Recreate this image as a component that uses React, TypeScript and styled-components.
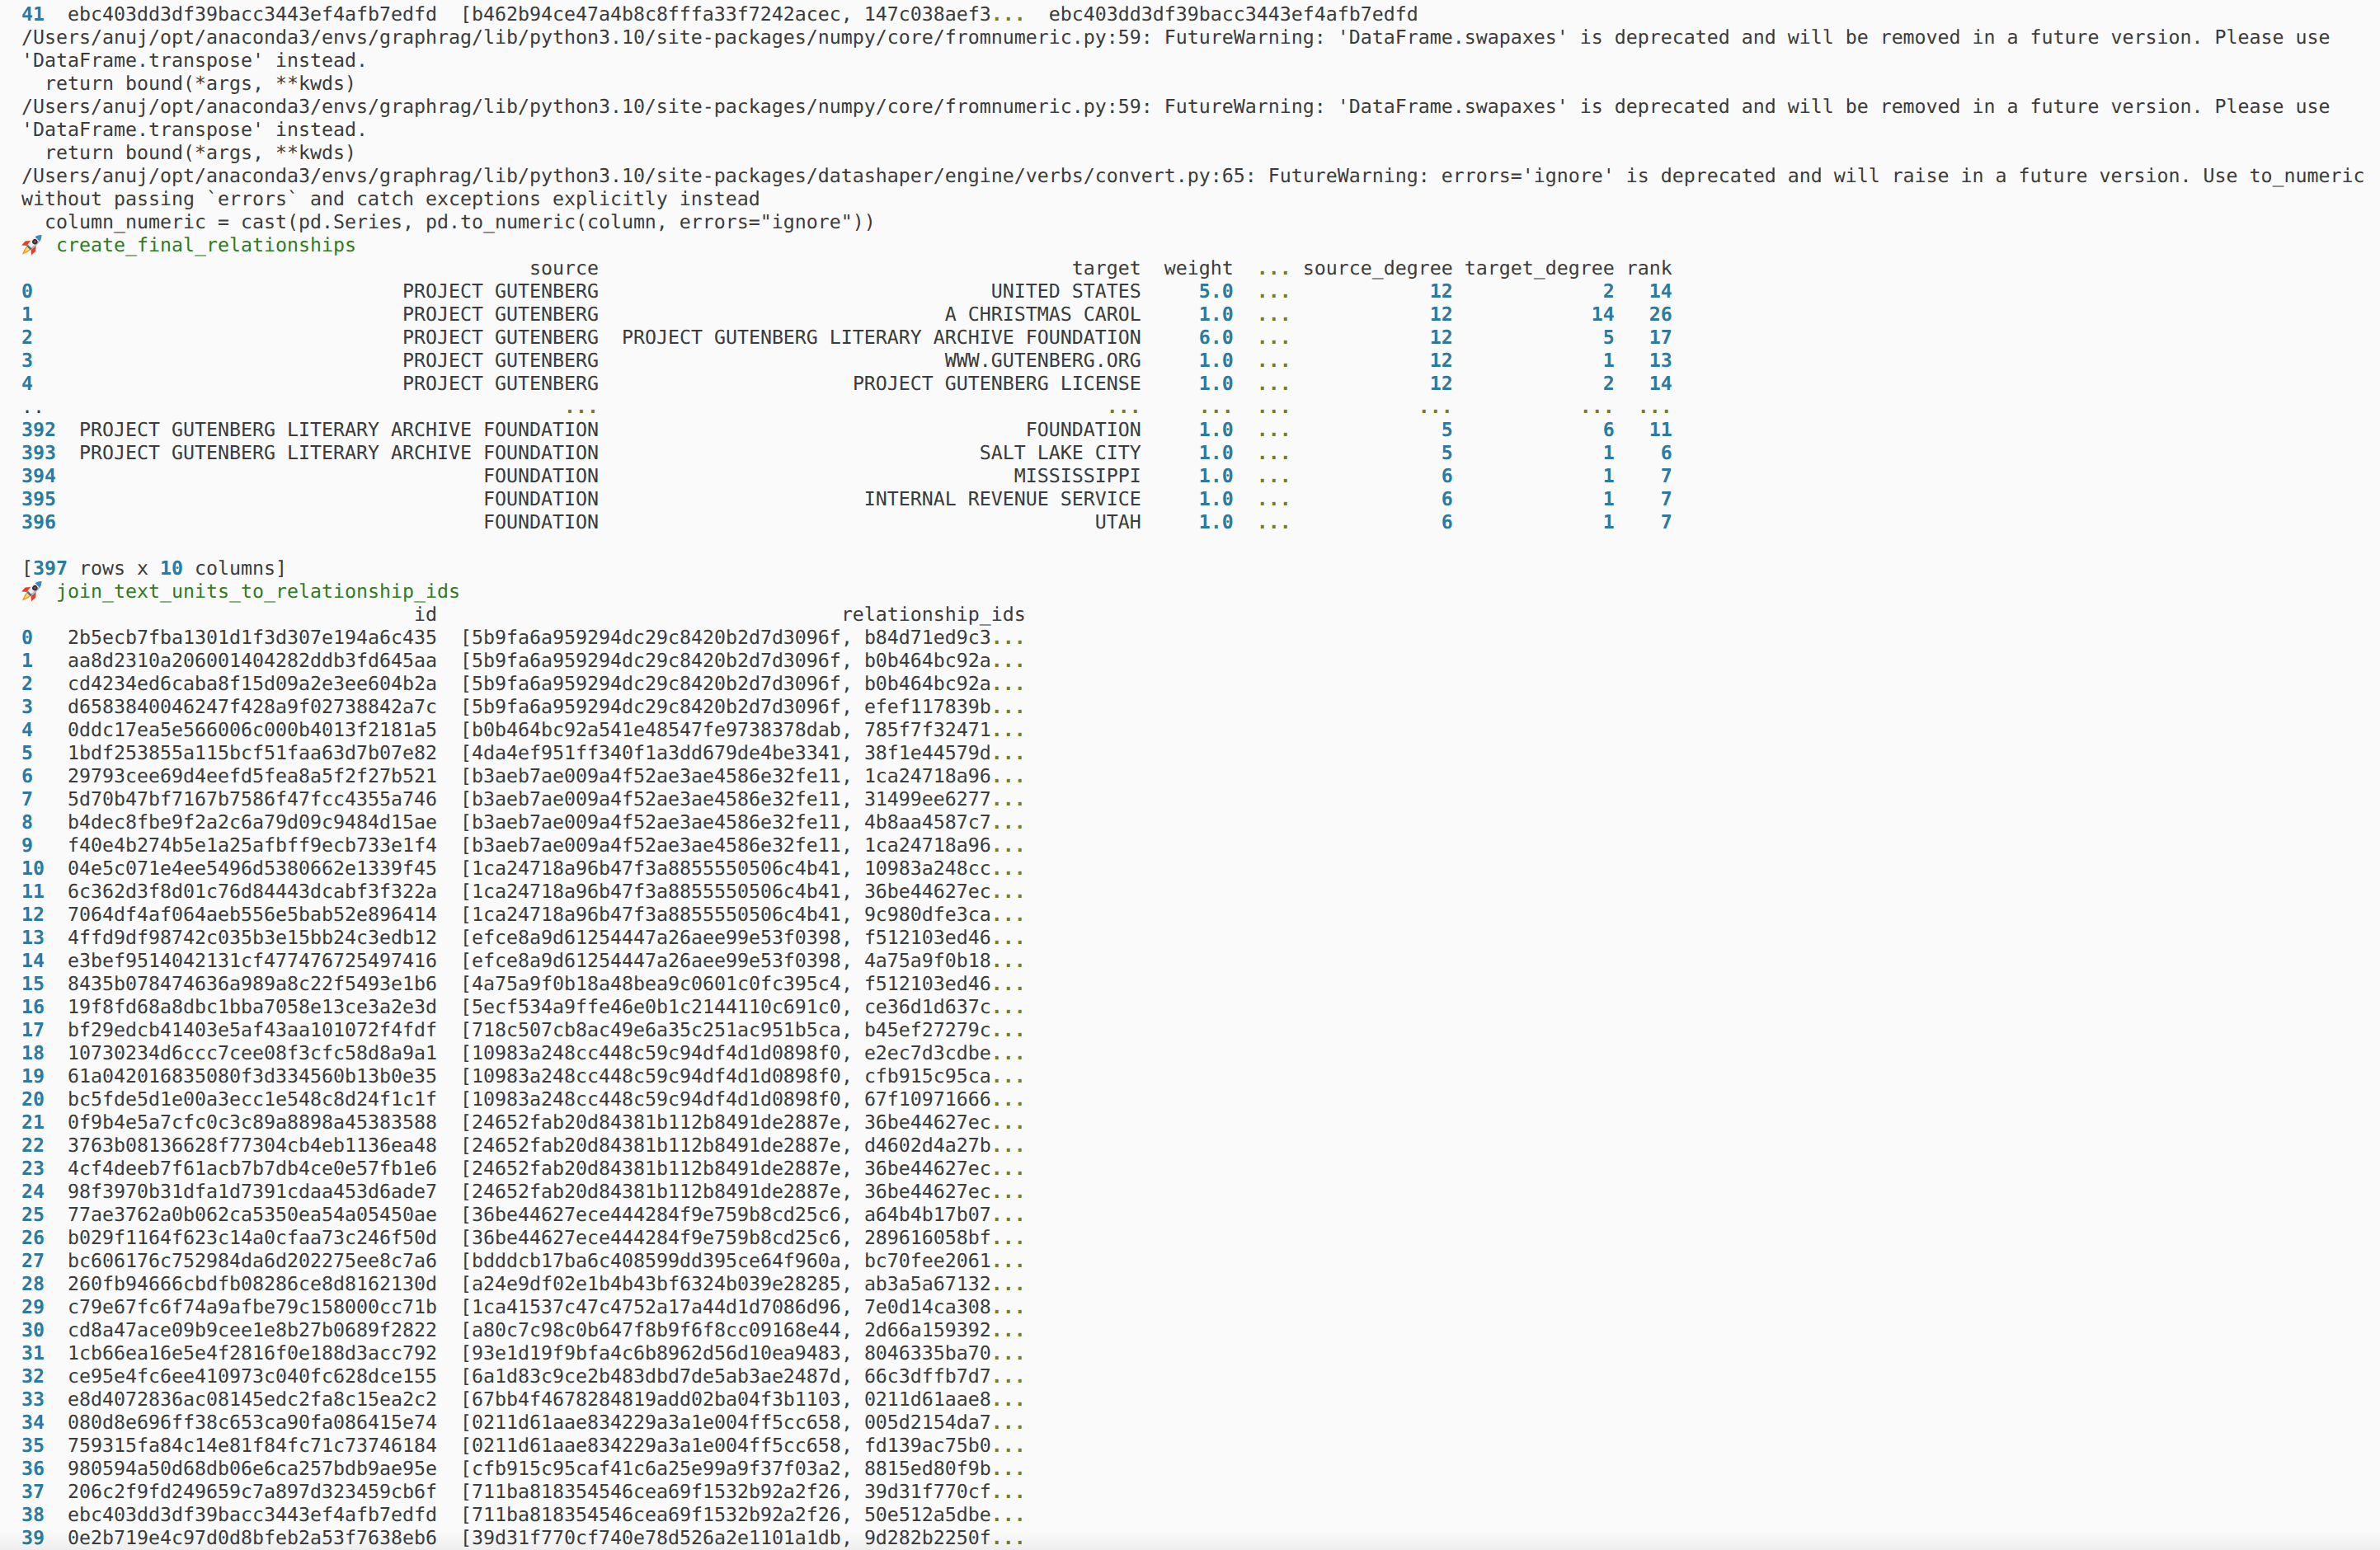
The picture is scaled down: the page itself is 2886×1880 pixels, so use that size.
import React from "react";
import styled, { createGlobalStyle } from "styled-components";

const GlobalStyle = createGlobalStyle`
	html, body {
		margin: 0;
		padding: 0;
		background: #fafafa;
	}
`;

const Terminal = styled.div`
	position: relative;
	width: 2886px;
	height: 1880px;
	overflow: hidden;
	box-sizing: border-box;
	padding: 4px 0 0 26px;
	background: #fafafa;
	color: #3b3b3b;
	font-family: "DejaVu Sans Mono", monospace;
	font-size: 23.256px;
	line-height: 28px;
	text-rendering: geometricPrecision;
`;

const Line = styled.div`
	height: 28px;
	white-space: pre;
`;

const Num = styled.span`
	color: #2f7a9c;
	font-weight: 700;
`;

const Dots = styled.span`
	color: #7a7a1c;
	font-weight: 700;
`;

const Task = styled.span`
	color: #2f7a22;
`;

const EmojiSlot = styled.span`
	display: inline-block;
	width: 2ch;
	height: 24px;
	vertical-align: -3px;

	svg {
		display: block;
		overflow: visible;
	}
`;

const BottomFade = styled.div`
	position: absolute;
	left: 0;
	right: 0;
	bottom: 0;
	height: 22px;
	background: linear-gradient(to bottom, rgba(0, 0, 0, 0), rgba(0, 0, 0, 0.05));
`;

const Rocket = () => (
	<EmojiSlot>
		<svg width="26" height="25" viewBox="0 0 24 24">
			<g transform="rotate(45 12 12)">
				<path d="M9 17 H15 C15.2 21 13.5 25 12 28.5 C10.5 25 8.8 21 9 17 Z" fill="#f39a26" />
				<path d="M10.2 17 H13.8 C13.8 20 12.8 22.5 12 24.5 C11.2 22.5 10.2 20 10.2 17 Z" fill="#ffe27a" />
				<path d="M8.4 9 L3.6 15 L4 21.5 L9 17 Z" fill="#e2402f" />
				<path d="M15.6 9 L20.4 15 L20 21.5 L15 17 Z" fill="#e2402f" />
				<path d="M12 -3.5 C16.5 1 17 8 15.4 17 H8.6 C7 8 7.5 1 12 -3.5 Z" fill="#e9edf0" />
				<path d="M13.5 -1.8 C16.4 2 16.8 8 15.4 17 H13.4 C14.8 9 14.8 3 13.5 -1.8 Z" fill="#aeb8c0" />
				<path d="M12 -3.5 C14 -1.6 15.2 0.8 15.8 3.4 H8.2 C8.8 0.8 10 -1.6 12 -3.5 Z" fill="#3f86c6" />
				<path d="M8.6 15.6 H15.4 L15 18 H9 Z" fill="#5d6870" />
				<circle cx="12" cy="7.5" r="3.1" fill="#2c3136" />
				<circle cx="12" cy="7.5" r="1.5" fill="#b8343a" />
			</g>
		</svg>
	</EmojiSlot>
);

const warningPath = "/Users/anuj/opt/anaconda3/envs/graphrag/lib/python3.10/site-packages";

// Table one: pandas pads every column, so the rows are built as padded strings
const sourceRows: [string, string, string, string, string, string, string][] = [
	["0", "PROJECT GUTENBERG", "UNITED STATES", "5.0", "12", "2", "14"],
	["1", "PROJECT GUTENBERG", "A CHRISTMAS CAROL", "1.0", "12", "14", "26"],
	["2", "PROJECT GUTENBERG", "PROJECT GUTENBERG LITERARY ARCHIVE FOUNDATION", "6.0", "12", "5", "17"],
	["3", "PROJECT GUTENBERG", "WWW.GUTENBERG.ORG", "1.0", "12", "1", "13"],
	["4", "PROJECT GUTENBERG", "PROJECT GUTENBERG LICENSE", "1.0", "12", "2", "14"],
	["..", "...", "...", "...", "...", "...", "..."],
	["392", "PROJECT GUTENBERG LITERARY ARCHIVE FOUNDATION", "FOUNDATION", "1.0", "5", "6", "11"],
	["393", "PROJECT GUTENBERG LITERARY ARCHIVE FOUNDATION", "SALT LAKE CITY", "1.0", "5", "1", "6"],
	["394", "FOUNDATION", "MISSISSIPPI", "1.0", "6", "1", "7"],
	["395", "FOUNDATION", "INTERNAL REVENUE SERVICE", "1.0", "6", "1", "7"],
	["396", "FOUNDATION", "UTAH", "1.0", "6", "1", "7"],
];

const A = "5b9fa6a959294dc29c8420b2d7d3096f";
const B = "b3aeb7ae009a4f52ae3ae4586e32fe11";
const C = "1ca24718a96b47f3a8855550506c4b41";
const D = "efce8a9d61254447a26aee99e53f0398";
const E = "10983a248cc448c59c94df4d1d0898f0";
const F = "24652fab20d84381b112b8491de2887e";
const G = "36be44627ece444284f9e759b8cd25c6";
const H = "0211d61aae834229a3a1e004ff5cc658";
const I = "711ba818354546cea69f1532b92a2f26";

const joinRows: [string, string, string][] = [
	["2b5ecb7fba1301d1f3d307e194a6c435", A, "b84d71ed9c3"],
	["aa8d2310a206001404282ddb3fd645aa", A, "b0b464bc92a"],
	["cd4234ed6caba8f15d09a2e3ee604b2a", A, "b0b464bc92a"],
	["d6583840046247f428a9f02738842a7c", A, "efef117839b"],
	["0ddc17ea5e566006c000b4013f2181a5", "b0b464bc92a541e48547fe9738378dab", "785f7f32471"],
	["1bdf253855a115bcf51faa63d7b07e82", "4da4ef951ff340f1a3dd679de4be3341", "38f1e44579d"],
	["29793cee69d4eefd5fea8a5f2f27b521", B, "1ca24718a96"],
	["5d70b47bf7167b7586f47fcc4355a746", B, "31499ee6277"],
	["b4dec8fbe9f2a2c6a79d09c9484d15ae", B, "4b8aa4587c7"],
	["f40e4b274b5e1a25afbff9ecb733e1f4", B, "1ca24718a96"],
	["04e5c071e4ee5496d5380662e1339f45", C, "10983a248cc"],
	["6c362d3f8d01c76d84443dcabf3f322a", C, "36be44627ec"],
	["7064df4af064aeb556e5bab52e896414", C, "9c980dfe3ca"],
	["4ffd9df98742c035b3e15bb24c3edb12", D, "f512103ed46"],
	["e3bef9514042131cf477476725497416", D, "4a75a9f0b18"],
	["8435b078474636a989a8c22f5493e1b6", "4a75a9f0b18a48bea9c0601c0fc395c4", "f512103ed46"],
	["19f8fd68a8dbc1bba7058e13ce3a2e3d", "5ecf534a9ffe46e0b1c2144110c691c0", "ce36d1d637c"],
	["bf29edcb41403e5af43aa101072f4fdf", "718c507cb8ac49e6a35c251ac951b5ca", "b45ef27279c"],
	["10730234d6ccc7cee08f3cfc58d8a9a1", E, "e2ec7d3cdbe"],
	["61a042016835080f3d334560b13b0e35", E, "cfb915c95ca"],
	["bc5fde5d1e00a3ecc1e548c8d24f1c1f", E, "67f10971666"],
	["0f9b4e5a7cfc0c3c89a8898a45383588", F, "36be44627ec"],
	["3763b08136628f77304cb4eb1136ea48", F, "d4602d4a27b"],
	["4cf4deeb7f61acb7b7db4ce0e57fb1e6", F, "36be44627ec"],
	["98f3970b31dfa1d7391cdaa453d6ade7", F, "36be44627ec"],
	["77ae3762a0b062ca5350ea54a05450ae", G, "a64b4b17b07"],
	["b029f1164f623c14a0cfaa73c246f50d", G, "289616058bf"],
	["bc606176c752984da6d202275ee8c7a6", "bdddcb17ba6c408599dd395ce64f960a", "bc70fee2061"],
	["260fb94666cbdfb08286ce8d8162130d", "a24e9df02e1b4b43bf6324b039e28285", "ab3a5a67132"],
	["c79e67fc6f74a9afbe79c158000cc71b", "1ca41537c47c4752a17a44d1d7086d96", "7e0d14ca308"],
	["cd8a47ace09b9cee1e8b27b0689f2822", "a80c7c98c0b647f8b9f6f8cc09168e44", "2d66a159392"],
	["1cb66ea16e5e4f2816f0e188d3acc792", "93e1d19f9bfa4c6b8962d56d10ea9483", "8046335ba70"],
	["ce95e4fc6ee410973c040fc628dce155", "6a1d83c9ce2b483dbd7de5ab3ae2487d", "66c3dffb7d7"],
	["e8d4072836ac08145edc2fa8c15ea2c2", "67bb4f4678284819add02ba04f3b1103", "0211d61aae8"],
	["080d8e696ff38c653ca90fa086415e74", H, "005d2154da7"],
	["759315fa84c14e81f84fc71c73746184", H, "fd139ac75b0"],
	["980594a50d68db06e6ca257bdb9ae95e", "cfb915c95caf41c6a25e99a9f37f03a2", "8815ed80f9b"],
	["206c2f9fd249659c7a897d323459cb6f", I, "39d31f770cf"],
	["ebc403dd3df39bacc3443ef4afb7edfd", I, "50e512a5dbe"],
	["0e2b719e4c97d0d8bfeb2a53f7638eb6", "39d31f770cf740e78d526a2e1101a1db", "9d282b2250f"],
];

// Padded dots are bold olive, anything else in the cell keeps the given look
const numCell = (value: string, width: number) => {
	const pad = " ".repeat(Math.max(0, width - value.length));
	return (
		<>
			{pad}
			{value === "..." ? <Dots>...</Dots> : <Num>{value}</Num>}
		</>
	);
};

const textCell = (value: string, width: number) => {
	const pad = " ".repeat(Math.max(0, width - value.length));
	return (
		<>
			{pad}
			{value === "..." ? <Dots>...</Dots> : value}
		</>
	);
};

const Swapaxes = () => (
	<>
		<Line>
			{warningPath}/numpy/core/fromnumeric.py:59: FutureWarning: 'DataFrame.swapaxes' is deprecated and will be removed
			in a future version. Please use
		</Line>
		<Line>'DataFrame.transpose' instead.</Line>
		<Line>{"  return bound(*args, **kwds)"}</Line>
	</>
);

const App = () => (
	<>
		<GlobalStyle />
		<Terminal>
			<Line>
				<Num>41</Num>
				{"  ebc403dd3df39bacc3443ef4afb7edfd  [b462b94ce47a4b8c8fffa33f7242acec, 147c038aef3"}
				<Dots>...</Dots>
				{"  ebc403dd3df39bacc3443ef4afb7edfd"}
			</Line>
			<Swapaxes />
			<Swapaxes />
			<Line>
				{warningPath}/datashaper/engine/verbs/convert.py:65: FutureWarning: errors='ignore' is deprecated and will raise
				in a future version. Use to_numeric
			</Line>
			<Line>without passing `errors` and catch exceptions explicitly instead</Line>
			<Line>{'  column_numeric = cast(pd.Series, pd.to_numeric(column, errors="ignore"))'}</Line>
			<Line>
				<Rocket /> <Task>create_final_relationships</Task>
			</Line>
			<Line>
				{"     "}
				{textCell("source", 45)}
				{"  "}
				{textCell("target", 45)}
				{"  "}
				{textCell("weight", 6)}
				{"  "}
				<Dots>...</Dots> {textCell("source_degree", 13)} {textCell("target_degree", 13)} {textCell("rank", 4)}
			</Line>
			{sourceRows.map(([index, source, target, weight, sourceDegree, targetDegree, rank]) => (
				<Line key={index}>
					{index === ".." ? ".. " : <Num>{index.padEnd(3)}</Num>}
					{"  "}
					{textCell(source, 45)}
					{"  "}
					{textCell(target, 45)}
					{"  "}
					{numCell(weight, 6)}
					{"  "}
					<Dots>...</Dots> {numCell(sourceDegree, 13)} {numCell(targetDegree, 13)} {numCell(rank, 4)}
				</Line>
			))}
			<Line />
			<Line>
				[<Num>397</Num> rows x <Num>10</Num> columns]
			</Line>
			<Line>
				<Rocket /> <Task>join_text_units_to_relationship_ids</Task>
			</Line>
			<Line>
				{"    "}
				{textCell("id", 32)}
				{"  "}
				{textCell("relationship_ids", 49)}
			</Line>
			{joinRows.map(([id, first, second], rowIndex) => (
				<Line key={id}>
					<Num>{String(rowIndex).padEnd(2)}</Num>
					{"  "}
					{id}
					{"  ["}
					{first}, {second}
					<Dots>...</Dots>
				</Line>
			))}
			<BottomFade />
		</Terminal>
	</>
);

export default App;
